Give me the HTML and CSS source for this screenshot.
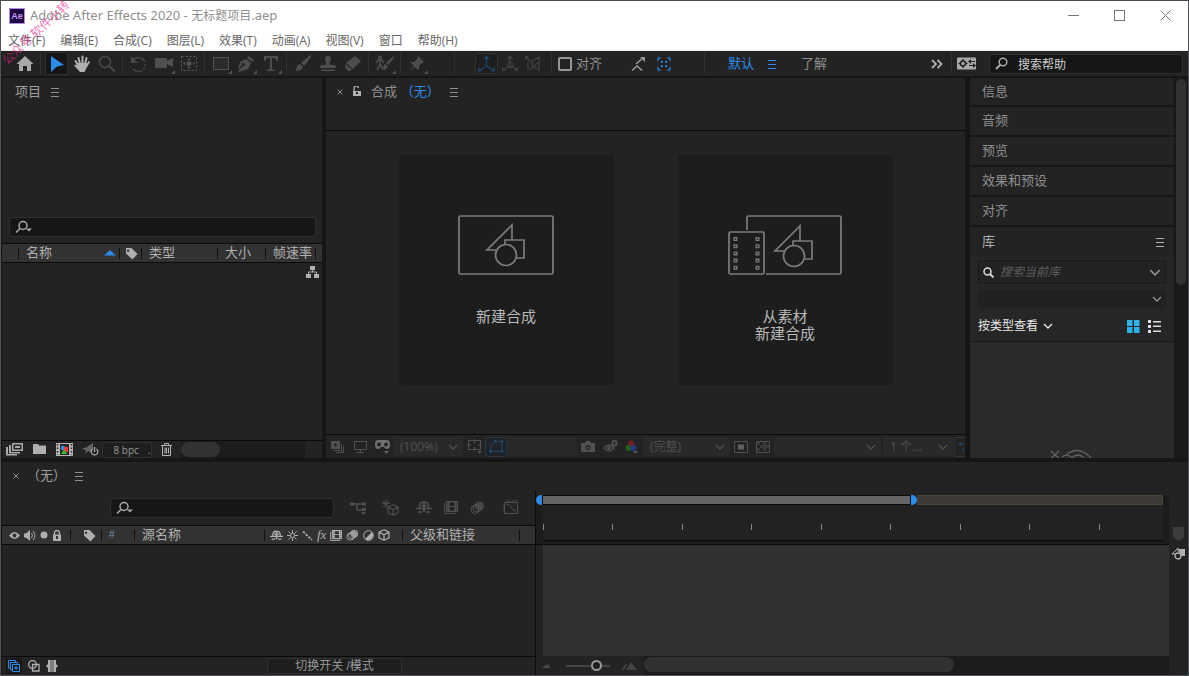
FILE: index.html
```html
<!DOCTYPE html>
<html lang="zh-CN">
<head>
<meta charset="utf-8">
<title>Adobe After Effects 2020 - 无标题项目.aep</title>
<link rel="stylesheet" href="styles.css">
</head>
<body>
<svg class="sprite" aria-hidden="true">
  <symbol id="menu" viewBox="0 0 10 10"><path d="M1 1.5h8M1 5.5h8M1 9.5h8" stroke="currentColor" fill="none"/></symbol>
  <symbol id="close" viewBox="0 0 6 6"><path d="M.5.5l5 5M5.5.5l-5 5" stroke="currentColor" fill="none"/></symbol>
  <symbol id="chev" viewBox="0 0 10 6"><path d="M1 1l4 4 4-4" stroke="currentColor" stroke-width="1.4" fill="none"/></symbol>
  <symbol id="find" viewBox="0 0 18 14"><circle cx="8" cy="5.5" r="4" stroke="currentColor" stroke-width="1.5" fill="none"/><path d="M5 8.5L1 12.500" stroke="currentColor" stroke-width="1.6"/><path d="M11 8.500h6l-3 3z" fill="currentColor"/></symbol>
  <symbol id="tag" viewBox="0 0 13 13"><path fill="currentColor" fill-rule="evenodd" d="M1 1h5.500l6 6-5 5.500-6.500-6zM3 2.500a1.200 1.200 0 1 0 .1 0z"/></symbol>
  <symbol id="shapes" viewBox="0 0 40 44"><path d="M11 27H2L27 2v15M20 21v-4h19v18h-7" fill="none" stroke="currentColor" stroke-width="1.7"/><circle cx="21" cy="32" r="10.500" fill="none" stroke="currentColor" stroke-width="1.7"/></symbol>
  <symbol id="cube" viewBox="0 0 12 12"><path d="M6 .8l5 2.400v5.600L6 11.200 1 8.800V3.200zM1 3.200l5 2.600 5-2.600M6 5.800v5.400" fill="none" stroke="currentColor" stroke-width="1.200"/></symbol>
  <symbol id="film" viewBox="0 0 14 13"><path fill-rule="evenodd" fill="currentColor" d="M2 0h12v11H2zM3 1.500v1h1v-1zM3 4v1h1V4zM3 6.500v1h1v-1zM3 9v1h1V9zM12 1.500v1h1v-1zM12 4v1h1V4zM12 6.500v1h1v-1zM12 9v1h1V9zM5.500 1.500v3.500h5V1.500zM5.500 6v3.500h5V6z"/><path d="M.6 2v10.400H12" fill="none" stroke="currentColor"/></symbol>
  <symbol id="blur" viewBox="0 0 15 13"><circle cx="5" cy="8.500" r="4" fill="none" stroke="currentColor"/><circle cx="7" cy="7" r="4" fill="none" stroke="currentColor"/><circle cx="9.500" cy="5" r="4.500" fill="currentColor" opacity=".75"/></symbol>
  <symbol id="shy" viewBox="0 0 16 13"><path d="M3.500 7V5q0-4 4.500-4t4.500 4v2" fill="none" stroke="currentColor" stroke-width="1.500"/><path d="M7 1h2v10H7zM5 4h6v1.500H5z" fill="currentColor"/><path d="M0 7.500h16M2 11h4M10 11h4" stroke="currentColor" stroke-width="1.500"/></symbol>
</svg>

<div class="app">
  <header class="titlebar">
    <svg class="logo" width="16" height="16" viewBox="0 0 16 16"><rect x=".5" y=".5" width="15" height="15" fill="#1f0740" stroke="#b48ae8"/><text x="8" y="11" text-anchor="middle" class="logo-text">Ae</text></svg>
    <h1 class="title">Adobe After Effects 2020 - <span>无标题项目</span>.aep</h1>
    <div class="window-buttons">
      <button aria-label="最小化"><svg width="11" height="11"><path d="M0 5.500h11" stroke="#777"/></svg></button>
      <button aria-label="最大化"><svg width="11" height="11"><rect x=".5" y=".5" width="10" height="10" fill="none" stroke="#777"/></svg></button>
      <button aria-label="关闭"><svg width="11" height="11"><path d="M.5.5l10 10M10.500.5l-10 10" stroke="#777"/></svg></button>
    </div>
  </header>
  <nav class="menubar">
    <button>文件(F)</button><button>编辑(E)</button><button>合成(C)</button><button>图层(L)</button><button>效果(T)</button><button>动画(A)</button><button>视图(V)</button><button>窗口</button><button>帮助(H)</button>
  </nav>
  <div class="watermark" aria-hidden="true">公众号 软件小转</div>

  <div class="toolbar">
    <button class="tool lit" aria-label="主页"><svg width="18" height="18"><path fill="#a9a9a9" d="M9 1l8.500 8H15v7h-4v-5H7v5H3V9H.5z"/></svg></button>
    <i class="sep"></i>
    <button class="tool active" aria-label="选取"><svg width="18" height="18"><path fill="#2d8ceb" d="M3 1l13 9-7 1.500L3 17z"/></svg></button>
    <button class="tool lit" aria-label="手形"><svg width="18" height="18"><path d="M5 10L2.500 6M7 9L5.500 3M9.500 9V1.500M12 9l1.500-6M13.500 11l2.500-4" stroke="#b0b0b0" stroke-width="2" stroke-linecap="round"/><path fill="#b0b0b0" d="M5 8h8.500l1.500 1-1.500 4-2 4H7L1 10.500l1.500-1L5 11z"/></svg></button>
    <button class="tool" aria-label="缩放"><svg width="18" height="18"><circle cx="7" cy="7" r="5.500" fill="none" stroke="#484848" stroke-width="1.500"/><path d="M11 11l6 5.500" stroke="#484848" stroke-width="2"/></svg></button>
    <i class="sep"></i>
    <button class="tool" aria-label="旋转"><svg width="18" height="18"><path d="M3 5a7 7 0 1 1 0 9" fill="none" stroke="#484848" stroke-width="1.500" stroke-dasharray="14 2 2 2 2 2"/><path fill="#484848" d="M1 1v7h7z"/></svg></button>
    <button class="tool corner" aria-label="摄像机"><svg width="20" height="18"><path fill="#505050" d="M2 3h10q1 0 1 1v2l6-3v9l-6-3v3q0 1-1 1H2q-1 0-1-1V4q0-1 1-1z"/></svg></button>
    <button class="tool" aria-label="锚点"><svg width="18" height="18"><rect x="1.500" y="1.500" width="15" height="14" fill="none" stroke="#606060" stroke-dasharray="2 2"/><path fill="#505050" d="M9 3l2 2H7zM9 14l2-2H7zM3 8.500l2-2v4zM15 8.500l-2-2v4z"/><circle cx="9" cy="8.500" r="2.500" fill="#505050"/></svg></button>
    <i class="sep"></i>
    <button class="tool corner" aria-label="矩形"><svg width="18" height="18"><rect x="1.500" y="2.500" width="15" height="12" fill="#2c2c2c" stroke="#525252"/></svg></button>
    <button class="tool corner" aria-label="钢笔"><svg width="18" height="18"><path fill="#4d4d4d" d="M12 1l5 4-2 2-5-4zM9 4l5 4-3 6-9 3-1-1L6 11a1.500 1.500 0 1 0-1-1L.5 15 3 7z"/></svg></button>
    <button class="tool corner" aria-label="文字"><svg width="18" height="18"><path fill="#4d4d4d" d="M2 1h14v5h-1.500L13 3h-3v11l3 1v1H5v-1l3-1V3H5L3.500 6H2z"/></svg></button>
    <i class="sep"></i>
    <button class="tool" aria-label="画笔"><svg width="18" height="18"><path fill="#4d4d4d" d="M17 0c1 1-4 8-7 11l-3-3C10 5 16 0 17 0zM6 9l3 3c-1 3-4 4-8 4 2-2 1-6 5-7z"/></svg></button>
    <button class="tool" aria-label="仿制图章"><svg width="18" height="18"><path fill="#4d4d4d" d="M9 1a3 3 0 0 1 3 3c0 2-2 3-1 6h4q2 0 2 3H1q0-3 2-3h4c1-3-1-4-1-6a3 3 0 0 1 3-3zM2 14.500h14V16H2z"/></svg></button>
    <button class="tool" aria-label="橡皮擦"><svg width="18" height="18"><path fill="#4d4d4d" d="M11 1l6 5-8 8-7-6zM1.500 9l6.500 5.500-1.500 1.500H4l-3-4z"/></svg></button>
    <i class="sep"></i>
    <button class="tool corner" aria-label="Roto 笔刷"><svg width="20" height="18"><circle cx="5" cy="2.500" r="2" fill="#4d4d4d"/><path d="M1 8l2-3h4l2 3M5 5v5l-3 5M5 9l3 5" fill="none" stroke="#4d4d4d" stroke-width="1.700"/><path fill="#4d4d4d" d="M19 1c1 1-4 7-6 9l-2-2c2-2 7-7 8-7zM10 9l2.500 2c0 3-2 4-5 4 2-1 0-5 2.500-6z"/></svg></button>
    <i class="sep"></i>
    <button class="tool corner" aria-label="人偶位置控点"><svg width="18" height="18"><path fill="#4d4d4d" d="M10 1l6 6-2 1-3 3v3l-1 1-3-3-5 4 4-5-4-4h4l3-3z"/></svg></button>
    <i class="sep wide"></i>
    <div class="axes">
      <button class="axis on" aria-label="本地轴"><svg width="19" height="18"><path d="M9.500 2v9L3 15M9.500 11l6.500 4" fill="none" stroke="currentColor" stroke-width="1.300"/><path fill="currentColor" d="M9.500 0l3 4h-6zM1 16.500V12l4 4.500zM18 16.500V12l-4 4.500z"/></svg></button>
      <button class="axis" aria-label="世界轴"><svg width="18" height="18"><path d="M9 2v9L3 14M9 11l6 3" fill="none" stroke="currentColor" stroke-width="1.300"/><circle cx="9" cy="10" r="3" fill="none" stroke="currentColor"/><path fill="currentColor" d="M9 0l3 4H6zM1 16v-4l4 4zM17 16v-4l-4 4z"/></svg></button>
      <button class="axis" aria-label="视图轴"><svg width="18" height="18"><path d="M4 7v7h3l8-7V2L8 6v5l7 4V8M2 2l5 5" fill="none" stroke="currentColor" stroke-width="1.200"/><path fill="currentColor" d="M1 1h4L1 5z"/></svg></button>
    </div>
    <i class="sep"></i>
    <label class="snap"><input type="checkbox">对齐</label>
    <button class="snapicon grey" aria-label="吸附边缘"><svg width="16" height="16"><path d="M1 14.500l5-4.500 5 4.500M5 8l7-6" fill="none" stroke="currentColor" stroke-width="1.600"/><path fill="currentColor" d="M9 1h5v5z"/></svg></button>
    <button class="snapicon blue" aria-label="吸附特征"><svg width="14" height="14"><path d="M1 4V1h3M10 1h3v3M13 10v3h-3M4 13H1v-3M4.500 6V4.500H6M8 4.500h1.500V6M9.500 8v1.500H8M6 9.500H4.500V8" fill="none" stroke="currentColor" stroke-width="1.200"/></svg></button>
    <div class="workspaces">
      <i class="sep"></i>
      <button class="ws blue">默认</button>
      <button class="blue" aria-label="工作区菜单"><svg width="10" height="10"><use href="#menu"/></svg></button>
      <button class="ws last">了解</button>
      <button class="more" aria-label="更多工作区"><svg width="12" height="10"><path d="M1 1l4 4-4 4M6.500 1l4 4-4 4" fill="none" stroke="#b0b0b0" stroke-width="1.800"/></svg></button>
    </div>
    <i class="sep"></i>
    <button class="sync" aria-label="同步设置"><svg width="20" height="13"><rect y=".5" width="19" height="12" rx="1" fill="#a9a9a9"/><circle cx="6" cy="6.500" r="2.500" fill="none" stroke="#222" stroke-width="1.500"/><path d="M6 2v2M6 9v2M1.500 6.500h2M8.500 6.500h2" stroke="#222" stroke-width="1.300"/><path d="M12 4.500h6M12 8.500h6" stroke="#222"/><path d="M14 2l-3 2.500L14 7zM16 6l3 2.500L16 11z" fill="#222"/></svg></button>
    <label class="field help"><svg width="13" height="13"><circle cx="8" cy="5" r="3.800" fill="none" stroke="#aaa" stroke-width="1.500"/><path d="M5.500 7.500L1 12" stroke="#aaa" stroke-width="2"/></svg><input type="text" placeholder="搜索帮助" aria-label="搜索帮助"></label>
  </div>

  <main class="upper">
    <section class="panel project">
      <div class="tab"><h2>项目</h2><button aria-label="面板菜单"><svg width="10" height="10"><use href="#menu"/></svg></button></div>
      <div class="preview"></div>
      <label class="field project-search"><svg width="18" height="14"><use href="#find"/></svg><input type="text" aria-label="搜索项目"></label>
      <table class="columns">
        <tr><th class="c-first"></th><th class="c-name"><span class="sorted">名称<svg width="12" height="6"><path d="M0 5.500L6 0l6 5.500z" fill="#2d8ceb"/></svg></span></th><th class="c-tag"><svg width="13" height="13"><use href="#tag"/></svg></th><th class="c-type">类型</th><th class="c-size">大小</th><th class="c-rate">帧速率</th><th></th></tr>
      </table>
      <div class="items"><button aria-label="流程图"><svg width="13" height="12"><path fill="#b0b0b0" d="M4 0h5v4H4zM0 8h5v4H0zM8 8h5v4H8z"/><path d="M6.500 4v2M2.500 8V6h8v2" fill="none" stroke="#b0b0b0"/></svg></button></div>
      <div class="project-footer">
        <button aria-label="解释素材"><svg width="18" height="13"><path fill="#a9a9a9" fill-rule="evenodd" d="M6 0h11v8H6zM7.500 1.500v5h8v-5zM9 3h5v2H9zM3 2h2v7h9v1.500H3zM0 4h2v7h9v1.500H0z"/></svg></button>
        <button aria-label="新建文件夹"><svg width="14" height="11"><path fill="#b0b0b0" d="M0 0h5l1 1.500h7V10H0z"/></svg></button>
        <button aria-label="新建合成"><svg width="17" height="13"><path fill="#b5b5b5" d="M0 0h17v13H0z"/><path fill="#262626" d="M4 1h9v11H4z"/><path d="M1.500 1v11M15.500 1v11" stroke="#262626" stroke-width="1.500" stroke-dasharray="1.500 2"/><circle cx="7" cy="5" r="2.300" fill="#2d8ceb"/><path fill="#f33" d="M8 4h4v5H8z"/><path fill="#3b3" d="M8 6l3 5H5z"/></svg></button>
        <button aria-label="项目设置"><svg width="17" height="13"><path fill="#646464" d="M11 0v6L8 9 6 8 3 11 4 7 0 6l5-2z"/><path d="M10.500 6a3.300 3.300 0 1 0 4 0M12.500 4v5" fill="none" stroke="#aaa" stroke-width="1.300"/></svg></button>
        <button class="bpc">8 bpc<span>.</span></button>
        <button aria-label="删除"><svg width="11" height="13"><path d="M0 2.500h11M3.500 2V.5h4V2M1.500 3v9.500h8V3M4 4.500v6M5.500 4.500v6M7.500 4.500v6" fill="none" stroke="#b5b5b5"/></svg></button>
        <div class="hscroll"><i></i></div>
      </div>
    </section>

    <section class="panel comp">
      <div class="tab comp-tab"><button aria-label="关闭"><svg width="6" height="6"><use href="#close"/></svg></button><svg width="10" height="11"><path d="M2 5V2.500a2 2 0 0 1 4.500-.5" fill="none" stroke="#b0b0b0" stroke-width="1.300"/><path fill="#b0b0b0" fill-rule="evenodd" d="M1 5h8v5H1zM4 6v2h2V6z"/></svg><h2>合成 <span class="blue">（无）</span></h2><button aria-label="面板菜单"><svg width="10" height="10"><use href="#menu"/></svg></button></div>
      <div class="stage">
        <button class="card"><svg width="96" height="60"><rect x="1" y="1" width="94" height="58" rx="1.500" fill="none" stroke="#7c7c7c" stroke-width="1.700"/><use href="#shapes" x="27" y="8" width="40" height="44"/></svg><span>新建合成</span></button>
        <button class="card"><svg width="114" height="60"><path d="M19 15V2.500Q19 1 20.500 1h91q1.500 0 1.500 1.500v55q0 1.500-1.500 1.500H38" fill="none" stroke="#7c7c7c" stroke-width="1.700"/><rect x="1" y="17" width="35" height="42" rx="1.500" fill="none" stroke="#7c7c7c" stroke-width="1.700"/><path d="M7.500 22v34M29.500 22v34" fill="none" stroke="#7c7c7c" stroke-width="4" stroke-dasharray="4 3.200"/><path d="M7.500 23.300v32M29.500 23.300v32" fill="none" stroke="#1d1d1d" stroke-width="1.400" stroke-dasharray="1.400 5.800"/><use href="#shapes" x="45" y="9" width="40" height="44"/></svg><span>从素材<br>新建合成</span></button>
      </div>
      <div class="comp-footer">
        <button aria-label="始终预览"><svg width="14" height="12"><path fill="#505050" fill-rule="evenodd" d="M0 0h9v8H0zM3.500 2v4l3-2zM10 3h1v7H3V9h7zM12 5h1v7H5v-1h7z"/></svg></button>
        <button aria-label="主查看器"><svg width="13" height="12"><path d="M.5.500h12v8H.5zM6.500 9v2M3 11.500h7" fill="none" stroke="#505050"/></svg></button>
        <button aria-label="VR"><svg width="15" height="14"><path fill="#707070" fill-rule="evenodd" d="M3 0h9q3 0 3 4.500T12 9q-2 0-3-2H6q-1 2-3 2-3 0-3-4.500T3 0zM4 2.500a2 2 0 1 0 .1 0zM11 2.500a2 2 0 1 0 .1 0z"/><path fill="#666" d="M9 11h5l-2.500 3z"/></svg></button>
        <span class="drop w70"><select aria-label="放大率"><option>(100%)</option></select><svg width="10" height="6"><use href="#chev"/></svg></span>
        <button aria-label="网格"><svg width="15" height="15"><rect x="1.500" y="1.500" width="12" height="9" fill="none" stroke="#505050"/><path d="M7.500 0v4M7.500 8v4M0 6h4M11 6h4" stroke="#505050"/><path fill="#505050" d="M10 12h5l-2.500 3z"/></svg></button>
        <button class="mask" aria-label="蒙版可见性"><svg width="15" height="13"><path d="M1.500 11.500C2 5 3 3 6 1.500h7v10z" fill="none" stroke="#23456b"/><path d="M5 0h2v3H5zM12 0h2v3h-2zM12 10h2v3h-2zM0 10h3v3H0z" fill="#23456b"/></svg></button>
        <span class="drop blank w70"></span>
        <button aria-label="快照"><svg width="15" height="12"><path fill="#505050" fill-rule="evenodd" d="M0 2h4l1-2h4l1 2h4v9H0zM7 4a2.500 2.500 0 1 0 .1 0z"/><circle cx="7" cy="6.500" r="1.200" fill="#505050"/></svg></button>
        <button aria-label="显示快照"><svg width="15" height="13"><path d="M1 8q5-6 10 0-5 6-10 0z" fill="none" stroke="#505050" stroke-width="1.500"/><circle cx="6" cy="8" r="2" fill="#505050"/><circle cx="11.500" cy="3" r="2.200" fill="none" stroke="#505050" stroke-width="2"/></svg></button>
        <button aria-label="通道"><svg width="14" height="14"><circle cx="6" cy="3.500" r="3" fill="#751d1d"/><circle cx="3.500" cy="8" r="3" fill="#23601f"/><circle cx="8.500" cy="8" r="3" fill="#2a3681"/><path fill="#555" d="M8 11h5l-2.500 3z"/></svg></button>
        <span class="drop w85"><select aria-label="分辨率"><option>(完整)</option></select><svg width="10" height="6"><use href="#chev"/></svg></span>
        <button aria-label="目标区域"><svg width="14" height="12"><path d="M.5.500h13v11H.5z" fill="none" stroke="#505050"/><path d="M4 3.500h6v5H4z" fill="#606060"/></svg></button>
        <button aria-label="透明网格"><svg width="14" height="12"><path d="M.5.500h13v11H.5z" fill="none" stroke="#505050"/><path d="M1 1h3v3h3V1h3v3h3v3h-3v3H7V7H4v3H1V7h3V4H1z" fill="#383838"/></svg></button>
        <span class="drop w105"><select aria-label="3D 视图"><option></option></select><svg width="10" height="6"><use href="#chev"/></svg></span>
        <span class="drop w70"><select aria-label="视图布局"><option>1 个...</option></select><svg width="10" height="6"><use href="#chev"/></svg></span>
        <button class="pixel" aria-label="像素长宽比"><svg width="14" height="12"><path d="M1 3h12M5 11V7h6v4z" fill="none" stroke="#23456b"/><path d="M3 1L0 3l3 2z" fill="#23456b"/></svg></button>
      </div>
    </section>

    <aside class="side">
      <div class="stack">
        <button class="fold">信息</button><button class="fold">音频</button><button class="fold">预览</button><button class="fold">效果和预设</button><button class="fold">对齐</button>
        <div class="lib-head"><h2>库</h2><button aria-label="面板菜单"><svg width="10" height="10"><use href="#menu"/></svg></button></div>
        <div class="lib-body">
          <label class="lib-search"><svg width="11" height="11"><circle cx="4.500" cy="4.500" r="3.500" fill="none" stroke="#ddd" stroke-width="1.500"/><path d="M7 7l3.500 3.500" stroke="#ddd" stroke-width="1.800"/></svg><input type="text" placeholder="搜索当前库" aria-label="搜索当前库"><svg class="big" width="12" height="7" viewBox="0 0 10 6"><use href="#chev"/></svg></label>
          <div class="lib-select"><select aria-label="选择库"><option></option></select><svg width="10" height="6"><use href="#chev"/></svg></div>
          <div class="lib-view"><select aria-label="查看方式"><option>按类型查看</option></select><svg class="white" width="10" height="6"><use href="#chev"/></svg>
            <button class="grid-btn" aria-label="网格视图"><svg width="14" height="13"><path fill="#2bb3ec" d="M1 0h5.500v6H1zM8 0h5.500v6H8zM1 7h5.500v6H1zM8 7h5.500v6H8z"/></svg></button>
            <button aria-label="列表视图"><svg width="14" height="13"><path fill="#ddd" d="M0 0h3v3H0zM0 5h3v3H0zM0 10h3v3H0zM5 1h8v1.500H5zM5 5.500h8V7H5zM5 10.500h8V12H5z"/></svg></button>
          </div>
        </div>
        <div class="lib-empty"><svg width="44" height="9"><path d="M1 2l4 4 4-4M5 6L1 9M5 6l4 3M12 8q5-4 10 1M17 5q12-9 24 4M22 9q6-6 12 0" fill="none" stroke="#666" stroke-width="1.200"/></svg></div>
      </div>
      <div class="vscroll"><i></i></div>
    </aside>
  </main>

  <section class="timeline">
    <div class="tab timeline-tab"><button aria-label="关闭"><svg width="6" height="6"><use href="#close"/></svg></button><h2>（无）</h2><button aria-label="面板菜单"><svg width="10" height="10"><use href="#menu"/></svg></button></div>
    <div class="timeline-main">
      <div class="layers">
        <div class="layer-tools">
          <label class="field layer-search"><svg width="18" height="14"><use href="#find"/></svg><input type="text" aria-label="搜索图层"></label>
          <button class="flow" aria-label="合成微型流程图"><svg width="16" height="14"><path d="M1 3h8M7 3v6h7M9 3h5" fill="none" stroke="#505050" stroke-width="1.500"/><path fill="#505050" d="M0 1.500h4v3H0zM12 1.500h4v3h-4zM12 7h4v3h-4zM11 11h5l-2.500 3z"/></svg></button>
          <button aria-label="草图 3D"><svg width="18" height="17"><path d="M5 0v9M1 4.500h8M2 2l6 6M8 2L2 8" stroke="#505050"/><use href="#cube" x="6" y="5" width="12" height="12"/></svg></button>
          <button class="shy" aria-label="隐藏图层"><svg width="16" height="13"><use href="#shy"/></svg></button>
          <button aria-label="帧混合"><svg width="14" height="13"><use href="#film"/></svg></button>
          <button aria-label="运动模糊"><svg width="15" height="13"><use href="#blur"/></svg></button>
          <button class="graph" aria-label="图表编辑器"><svg width="16" height="15"><path d="M1.500 2.500h13v11h-13zM3 4q4 0 5 3t5 4M4 0v2M7 0v2M10 0v2M13 0v2M0 5h2M0 8h2M0 11h2" fill="none" stroke="#505050"/></svg></button>
        </div>
        <table class="columns layer-columns">
          <tr>
            <th class="l-av"><span class="icons"><svg width="11" height="9"><path d="M0 4.500q5.500-7 11 0-5.500 7-11 0z" fill="#b0b0b0"/><circle cx="5.500" cy="4.500" r="2" fill="#323232"/></svg><svg width="12" height="11"><path d="M0 3.500h2L6 0v11L2 7.500H0z" fill="#b0b0b0"/><path d="M7.500 3q2 2.500 0 5M9 1q4 4.500 0 9" fill="none" stroke="#b0b0b0"/></svg><svg width="8" height="8"><circle cx="4" cy="4" r="3.500" fill="#b0b0b0"/></svg><svg width="10" height="11"><path d="M2.500 5V3a2.500 2.500 0 0 1 5 0v2" fill="none" stroke="#b0b0b0" stroke-width="1.300"/><path fill="#b0b0b0" fill-rule="evenodd" d="M1 4.500h8V11H1zM4 6v3h2V6z"/></svg></span></th>
            <th class="l-tag"><svg width="13" height="13"><use href="#tag"/></svg></th>
            <th class="l-num">#</th>
            <th class="l-name">源名称</th>
            <th class="l-switch"><span class="icons"><svg width="13" height="11" viewBox="0 0 16 13"><use href="#shy" width="16" height="13"/></svg><svg width="11" height="11"><circle cx="5.500" cy="5.500" r="2" fill="none" stroke="#b0b0b0"/><path d="M5.500 0v3M5.500 8v3M0 5.500h3M8 5.500h3M1.500 1.500l2 2M7.500 7.500l2 2M9.500 1.500l-2 2M3.500 7.500l-2 2" stroke="#b0b0b0"/></svg><svg width="11" height="11"><path d="M1 1.500l9 8.500" stroke="#b0b0b0" stroke-width="1.700" stroke-dasharray="2.500 1.200"/></svg><em>fx</em><svg width="12" height="11" viewBox="0 0 14 13"><use href="#film" width="14" height="13"/></svg><svg width="13" height="12" viewBox="0 0 15 13"><use href="#blur" width="15" height="13"/></svg><svg width="11" height="11"><circle cx="5.500" cy="5.500" r="4.800" fill="none" stroke="#b0b0b0"/><path d="M9 2a5 5 0 0 1-7 7z" fill="#b0b0b0"/></svg><svg width="12" height="12"><use href="#cube"/></svg></span></th>
            <th class="l-parent">父级和链接</th><th></th>
          </tr>
        </table>
        <div class="layer-list"></div>
        <div class="layer-footer">
          <button class="blue framed" aria-label="图层开关"><svg width="12" height="12"><path d="M3 8H.500V.500h7V3M5 10H2.500V2.500h7V5M4.500 4.500h7v7h-7zM8 6v4M6 8h4" fill="none" stroke="currentColor"/></svg></button>
          <button aria-label="转换控制"><svg width="12" height="12"><circle cx="4.500" cy="4.500" r="3.800" fill="none" stroke="#b0b0b0" stroke-width="1.300"/><path d="M4.500 4.500h6.500v6.500H4.500z" fill="none" stroke="#b0b0b0" stroke-width="1.300"/></svg></button>
          <button aria-label="入点出点"><svg width="12" height="12"><path fill="#808080" d="M4 0h4v12H4z"/><path fill="#b0b0b0" d="M2 0h2v12H2V8L0 6l2-2zM8 0h2v4l2 2-2 2v4H8z"/></svg></button>
          <button class="toggle">切换开关 /模式</button>
        </div>
      </div>
      <div class="tracks">
        <div class="ruler">
          <div class="navigator"><i class="knob start"></i><i class="range"></i><i class="knob end"></i><i class="rest"></i></div>
          <div class="ticks"><i></i><i></i><i></i><i></i><i></i><i></i><i></i><i></i><i></i></div>
        </div>
        <div class="track-body"></div>
        <div class="track-footer">
          <div class="zoom"><svg width="9" height="4"><path d="M0 4l3-3 1 1 2-2 3 4z" fill="#484848"/></svg><input type="range" min="0" max="100" value="76" aria-label="时间缩放"><svg width="16" height="8"><path d="M0 8l5-6 1 1-3 5zM5 8l5-8 6 8z" fill="#444"/></svg></div>
          <div class="track-scroll"><i></i></div>
        </div>
      </div>
      <div class="edge">
        <svg width="11" height="14"><path d="M0 0h11v10l-5.500 4L0 10z" fill="#3c3c3c"/></svg>
        <button aria-label="合成按钮"><svg width="15" height="13"><path fill="#b0b0b0" d="M7 2h7v7h-4z"/><path d="M7 5V1L1 7h3" fill="none" stroke="#b0b0b0"/><circle cx="7" cy="9" r="3" fill="#232323" stroke="#b0b0b0" stroke-width="1.300"/></svg></button>
      </div>
    </div>
  </section>
</div>
</body>
</html>
```
FILE: styles.css
```css
* { box-sizing: border-box; }

body {
  margin: 0;
  background: #161616;
  color: #8f8f8f;
  font: 13px/18px "Liberation Sans", "Noto Sans CJK SC", sans-serif;
}

button, input, select {
  margin: 0;
  padding: 0;
  border: 0;
  background: none;
  color: inherit;
  font: inherit;
}

button { display: flex; align-items: center; justify-content: center; }
select { appearance: none; min-width: 0; flex: 1; }
input[type="text"] { min-width: 0; flex: 1; outline: 0; }
h1, h2 { margin: 0; font: inherit; }
svg { display: block; flex: none; }
i { display: block; flex: none; }

.sprite { position: absolute; width: 0; height: 0; }
.blue { color: #2d8ceb; }

.app {
  position: relative;
  display: flex;
  flex-direction: column;
  min-height: 100vh;
  border: 1px solid #4d5558;
  border-top-color: #4a4a4a;
  overflow: hidden;
}

/* window chrome */
.titlebar {
  display: flex;
  align-items: center;
  height: 29px;
  padding-left: 8px;
  background: #fff;
}
.logo-text { fill: #c79bf7; font: bold 9px "Liberation Sans", sans-serif; }
.title {
  flex: 1;
  padding-left: 5px;
  color: #8f8f8f;
  font: 13px/18px "Noto Sans", "Noto Sans CJK SC", sans-serif;
}
.title span { font-size: 12px; }
.window-buttons { display: flex; }
.window-buttons button { width: 46px; height: 29px; }

.menubar {
  display: flex;
  gap: 15px;
  height: 21px;
  padding: 2px 0 0 7px;
  border-bottom: 1px solid #eee;
  background: #fff;
  color: #666;
  font: 12px/18px "Open Sans", "Noto Sans CJK SC", sans-serif;
}

.watermark {
  position: absolute;
  top: 25px;
  left: -9px;
  z-index: 2;
  color: rgba(233, 30, 140, 0.65);
  font: 12px/12px "Noto Sans CJK SC", sans-serif;
  white-space: nowrap;
  transform: rotate(-43deg);
}

/* tools */
.toolbar {
  display: flex;
  align-items: center;
  height: 25px;
  padding: 0 5px 0 11px;
  background: #232323;
}
.tool { position: relative; width: 25px; height: 23px; }
.tool.active {
  width: 23px;
  margin: 0 1px;
  border: 1px solid #303030;
  border-radius: 3px;
  background: #161616;
}
.tool.corner::after {
  content: "";
  position: absolute;
  right: 1px;
  bottom: 1px;
  border: 2px solid;
  border-color: transparent #505050 #505050 transparent;
}
.sep { width: 7px; height: 21px; border-left: 3px solid #232323; border-right: 3px solid #232323; background: #303030; }
.sep.wide { width: 46px; border-left-width: 25px; border-right-width: 20px; }
.axes { display: flex; padding-right: 4px; color: #424242; }
.axis { width: 23px; height: 21px; }
.axis.on { border: 1px solid #303030; border-radius: 3px; background: #1e1e1e; color: #1d4370; }
.snap { display: flex; align-items: center; gap: 4px; width: 71px; padding-left: 3px; }
.snap input {
  appearance: none;
  width: 14px;
  height: 14px;
  border: 2px solid #999;
  border-radius: 2px;
}
.snapicon { width: 25px; }
.grey { color: #999; }
.workspaces {
  display: flex;
  align-items: center;
  flex: 1;
  margin-left: 25px;
  white-space: nowrap;
}
.ws { width: 26px; margin: 0 13px 0 20px; }
.ws.last { margin-left: 24px; }
.more { margin-left: auto; margin-right: 5px; }
.sync { width: 24px; margin-right: 10px; }
.field {
  display: flex;
  align-items: center;
  height: 20px;
  border: 1px solid #2f2f2f;
  border-radius: 3px;
  background: #161616;
}
.help { width: 194px; gap: 10px; padding-left: 5px; font-size: 12px; }
.help input { padding-top: 2px; }
.help input::placeholder { color: #ccc; opacity: 1; }

/* panels */
.upper { display: flex; flex: 1; gap: 4px; padding: 2px 0 4px 1px; }
.panel, .stack, .timeline { background: #232323; }
.panel { display: flex; flex-direction: column; }
.tab { display: flex; align-items: center; gap: 9px; height: 27px; padding-left: 13px; }
.tab h2 { color: #a0a0a0; }

.project { width: 320px; }
.preview { height: 112px; }
.project-search { margin: 0 6px 6px 7px; padding-left: 5px; color: #aaa; }
.columns {
  width: 100%;
  height: 20px;
  border-collapse: separate;
  border-spacing: 0;
  table-layout: fixed;
  border: solid #0a0a0a;
  border-width: 1px 0;
  background: #323232;
  color: #b0b0b0;
}
.columns th {
  height: 18px;
  padding: 0 0 0 7px;
  background: linear-gradient(#111, #111) right center / 1px 11px no-repeat;
  font-weight: normal;
  text-align: left;
  white-space: nowrap;
}
.columns th:last-child { background: none; }
.c-first { width: 17px; }
.c-name { width: 101px; }
.sorted { display: flex; align-items: center; justify-content: space-between; padding-right: 4px; }
.columns .c-tag { width: 22px; padding-left: 5px; }
.c-type { width: 76px; }
.c-size { width: 48px; }
.c-rate { width: 50px; }
.items { display: flex; justify-content: flex-end; align-items: flex-start; flex: 1; padding: 3px 3px 0 0; }
.project-footer {
  display: flex;
  align-items: center;
  gap: 9px;
  height: 18px;
  padding-left: 4px;
  border-top: 1px solid #0a0a0a;
}
.bpc {
  gap: 9px;
  width: 50px;
  height: 16px;
  margin-left: -6px;
  padding-left: 10px;
  border: 1px solid #303030;
  border-radius: 3px;
  background: #1e1e1e;
  color: #999;
  font: 10px/14px "Open Sans", sans-serif;
}
.hscroll { width: 124px; height: 17px; background: #1c1c1c; }
.hscroll i { width: 39px; height: 15px; margin: 1px 0; border-radius: 8px; background: #323232; }

.comp { flex: 1; min-width: 0; }
.comp-tab { height: 27px; padding-left: 11px; margin-bottom: 25px; }
.comp-tab h2 { color: #8f8f8f; }
.stage {
  display: flex;
  justify-content: center;
  align-items: flex-start;
  gap: 64px;
  flex: 1;
  padding: 24px 0;
  border: solid #0a0a0a;
  border-width: 1px 0;
}
.card {
  flex-direction: column;
  justify-content: flex-start;
  gap: 33px;
  width: 215px;
  min-height: 230px;
  padding-top: 60px;
  border-radius: 3px;
  background: #1d1d1d;
  color: #b8b8b8;
  font-size: 15px;
  line-height: 17px;
}
.card svg { color: #7c7c7c; }
.comp-footer {
  display: flex;
  align-items: center;
  height: 23px;
  padding-left: 1px;
  overflow: hidden;
  color: #505050;
}
.comp-footer button { flex: none; width: 22px; height: 20px; }
.drop {
  display: flex;
  align-items: center;
  flex: none;
  height: 19px;
  padding: 0 5px 0 7px;
  border-radius: 3px;
  background: #292929;
}
.drop select { font: 12px/18px "Noto Sans", "Noto Sans CJK SC", sans-serif; }
.drop + .drop { margin-left: 2px; }
.w70 { width: 70px; }
.w85 { width: 87px; }
.w105 { width: 107px; }
.comp-footer .mask { border: 1px solid #2b3540; border-radius: 3px; background: #1f2327; }
.comp-footer .pixel { margin-left: 1px; border: 1px solid #2b3540; }

/* right column */
.side { display: flex; width: 218px; margin-left: 1px; }
.stack { display: flex; flex-direction: column; flex: 1; min-width: 0; }
.fold {
  justify-content: flex-start;
  height: 30px;
  padding: 0 12px;
  border-bottom: 2px solid #161616;
}
.fold:first-child { height: 29px; }
.lib-head { display: flex; align-items: center; justify-content: space-between; height: 29px; padding: 0 9px 0 12px; color: #b0b0b0; }
.lib-body { padding: 4px 8px 0; border-bottom: 1px solid #161616; background: #262626; }
.lib-search, .lib-select, .lib-view { display: flex; align-items: center; }
.lib-search { gap: 6px; height: 24px; padding: 0 4px 0 4px; border: 1px solid #1a1a1a; background: #222; font-size: 12px; }
.lib-search input { font-style: italic; }
.lib-search input::placeholder { color: #5c5c5c; opacity: 1; }
.lib-select { height: 18px; margin-top: 6px; padding-right: 4px; background: #212121; }
.lib-view { height: 33px; padding-top: 3px; color: #e8e8e8; font-size: 12px; }
.lib-view select { flex: none; width: 60px; margin-right: 5px; }
.grid-btn { margin: 0 8px 0 auto; }
.lib-view button:last-child { margin-right: 4px; }
.lib-empty { display: flex; justify-content: center; align-items: flex-end; flex: 1; background: #2a2a2a; }
.vscroll { flex: none; width: 13px; margin-left: 1px; background: #1a1a1a; }
.vscroll i { width: 10px; height: 206px; margin: 1px; border-radius: 5px; background: #323232; }

/* timeline */
.timeline { margin-left: 1px; }
.timeline-tab { gap: 8px; height: 28px; padding-left: 11px; }
.timeline-main { display: flex; }
.layers { display: flex; flex-direction: column; width: 533px; }
.layer-tools { display: flex; align-items: center; gap: 12px; height: 35px; padding-left: 108px; color: #505050; }
.layer-search { width: 224px; margin-right: 4px; padding-left: 5px; color: #aaa; }
.layer-tools .flow { margin-right: 3px; }
.layer-tools .shy { margin-left: 5px; }
.layer-tools .graph { margin-left: 6px; }
.layer-columns th { padding-left: 7px; }
.icons { display: flex; align-items: center; gap: 4px; }
.icons em { font: italic 13px/16px "Liberation Serif", serif; }
.l-av { width: 69px; }
.columns .l-tag { width: 31px; padding-left: 12px; }
.l-num { width: 33px; color: #6e94b8; font-size: 10px; }
.l-name { width: 130px; }
.columns .l-switch { width: 138px; padding-left: 5px; }
.l-parent { width: 117px; }
.layer-list { min-height: 111px; flex: 1; }
.layer-footer {
  display: flex;
  align-items: center;
  gap: 6px;
  height: 19px;
  padding-left: 4px;
  border-top: 1px solid #0a0a0a;
}
.framed { width: 16px; height: 16px; background: #1a1a1a; }
.toggle {
  width: 135px;
  height: 16px;
  margin-left: 203px;
  border: 1px solid #303030;
  border-radius: 3px;
  background: #1e1e1e;
  color: #999;
  font-size: 12px;
  line-height: 14px;
}
.tracks { display: flex; flex-direction: column; flex: 1; border-left: 1px solid #0a0a0a; }
.ruler { height: 50px; margin-top: 5px; padding-right: 6px; background: #1c1c1c; border-radius: 5px 5px 0 0; border-bottom: 1px solid #0a0a0a; }
.navigator { display: flex; height: 10px; }
.knob { width: 6px; background: #2d8ceb; }
.knob.start { border-radius: 5px 0 0 5px; }
.knob.end { border-radius: 0 5px 5px 0; }
.range { flex: 369; border: 1px solid #0a0a0a; background: #646464; }
.rest { flex: 246; border: 1px solid #484234; background: #3e3a36; }
.ticks { display: flex; height: 36px; margin-left: 7px; padding-top: 19px; background: #222; border-bottom: 1px solid #0a0a0a; }
.ticks i { flex: 0 0 11.2%; height: 6px; border-left: 1px solid #888; }
.track-body { flex: 1; margin-left: 7px; background: #313131; }
.track-footer { display: flex; height: 19px; }
.zoom { display: flex; align-items: center; gap: 15px; width: 108px; padding-left: 6px; }
.zoom input {
  appearance: none;
  width: 44px;
  height: 12px;
  background: linear-gradient(#444, #444) center / 100% 2px no-repeat;
}
.zoom input::-webkit-slider-thumb {
  appearance: none;
  width: 11px;
  height: 11px;
  border: 2px solid #999;
  border-radius: 50%;
  background: #1c1c1c;
}
.zoom svg:last-child { margin-left: -4px; }
.track-scroll { flex: 1; background: #1c1c1c; }
.track-scroll i { width: 59%; height: 15px; margin-top: 1px; border-radius: 8px; background: #313131; }
.edge { display: flex; flex-direction: column; align-items: center; gap: 6px; width: 19px; padding-top: 37px; }
```
